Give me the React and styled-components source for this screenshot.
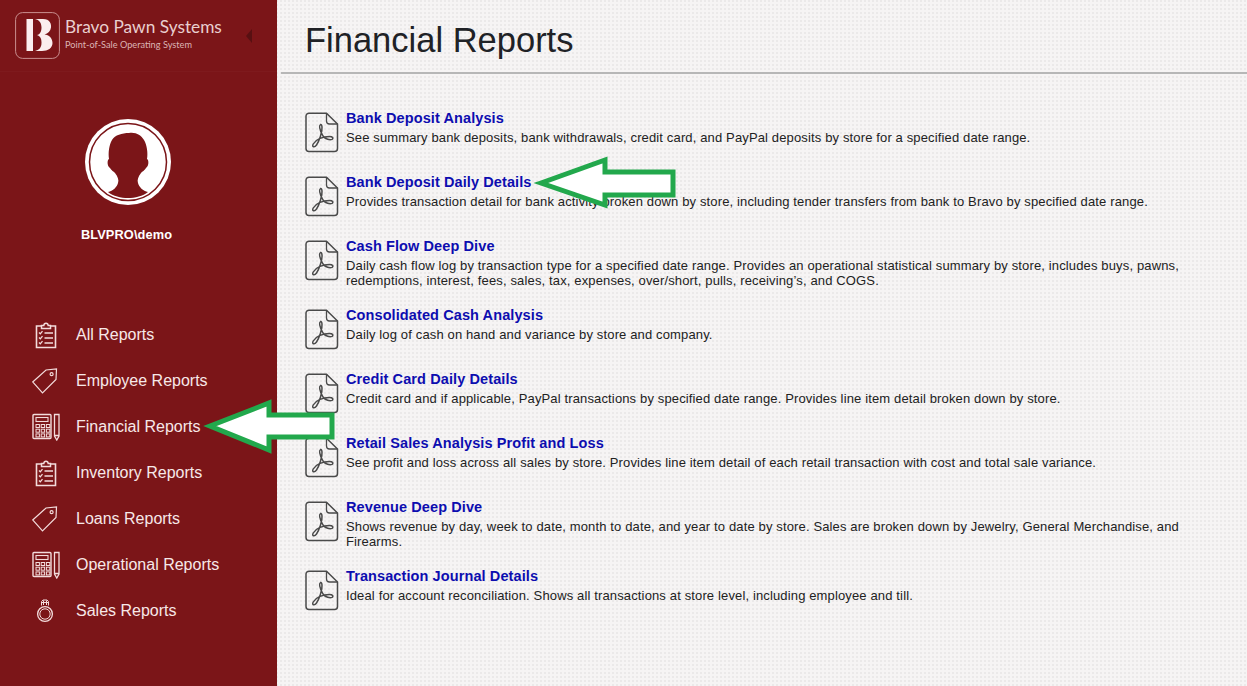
import React from "react";
import styled, { createGlobalStyle } from "styled-components";

const Global = createGlobalStyle`
  html, body { margin: 0; padding: 0; height: 100%; overflow: hidden; }
  body { font-family: "Liberation Sans", Arial, sans-serif; }
  * { box-sizing: border-box; }
`;

const Page = styled.div`
  position: relative;
  display: flex;
  width: 1247px;
  height: 686px;
  overflow: hidden;
  background-color: #f6f4f4;
  background-image: radial-gradient(circle at 1px 1px, #ebe9e9 0.8px, transparent 1px);
  background-size: 4px 4px;
`;

const Sidebar = styled.aside`
  flex: 0 0 277px;
  display: flex;
  flex-direction: column;
  background: #7b1518;
  color: #fff;
`;

const Brand = styled.div`
  height: 72px;
  display: flex;
  align-items: flex-start;
  padding: 12px 0 0 15px;
  border-bottom: 1px solid #7e1a1d;
`;

const LogoBox = styled.svg`
  width: 45px;
  height: 47px;
  flex: none;
`;

const BrandText = styled.div`
  margin: 4px 0 0 5px;
  font-family: Lato, sans-serif;
  color: #e9cfcf;
  flex: 0 0 187px;
`;

const BrandName = styled.div`
  font-size: 17.3px;
  line-height: 21px;
  white-space: nowrap;
`;

const BrandSub = styled.div`
  font-size: 9.2px;
  line-height: 12px;
  margin-top: 2px;
  white-space: nowrap;
  color: #dcb4b4;
`;

const Caret = styled.div`
  width: 0;
  height: 0;
  margin: 17px 0 0 -6px;
  border-style: solid;
  border-width: 7px 6px 7px 0;
  border-color: transparent #581012 transparent transparent;
`;

const Profile = styled.div`
  display: flex;
  flex-direction: column;
  align-items: center;
  padding: 47px 21px 0 0;
`;

const Avatar = styled.svg`
  width: 86px;
  height: 86px;
`;

const UserName = styled.div`
  margin: 22px 3px 0 0;
  font-size: 12.8px;
  line-height: 16px;
  font-weight: 700;
  letter-spacing: 0.1px;
`;

const Nav = styled.nav`
  display: flex;
  flex-direction: column;
  margin-top: 69px;
  padding-left: 32px;
`;

const NavItem = styled.a`
  display: flex;
  align-items: center;
  height: 46px;
  font-size: 16px;
  color: #f7e8e8;
`;

const NavIcon = styled.svg`
  width: 28px;
  height: 28px;
  flex: none;
  margin-right: 16px;
  fill: none;
  stroke: #f3dcdc;
  stroke-width: 1.3;
`;

const Main = styled.main`
  flex: 1;
  min-width: 0;
  padding-left: 4px;
`;

const Header = styled.header`
  height: 74px;
  padding: 18px 0 0 24px;
  border-bottom: 2px solid #b7b7b7;
`;

const Title = styled.h1`
  margin: 0;
  font-size: 34.5px;
  line-height: 44px;
  font-weight: 400;
  color: #202226;
`;

const ReportList = styled.div`
  display: flex;
  flex-direction: column;
  padding: 36px 60px 0 24px;
`;

const Report = styled.article`
  display: flex;
  align-items: flex-start;
  min-height: 45px;
  margin-bottom: 19px;
`;

const PdfIcon = styled.svg`
  width: 34px;
  height: 41px;
  flex: none;
  margin: 2px 7px 0 0;
  fill: none;
  stroke: #4a4a4a;
`;

const ReportBody = styled.div`
  min-width: 0;
`;

const ReportTitle = styled.a`
  display: block;
  font-size: 14.5px;
  line-height: 17px;
  font-weight: 700;
  color: #0d0db0;
  letter-spacing: 0.1px;
`;

const ReportDesc = styled.p`
  margin: 3px 0 0;
  font-size: 13px;
  line-height: 15px;
  color: #222;
  letter-spacing: 0.14px;
`;

const Overlay = styled.svg`
  position: absolute;
  left: 0;
  top: 0;
  width: 1247px;
  height: 686px;
  pointer-events: none;
`;

const Pdf = () => (
  <PdfIcon viewBox="0 0 34 41">
    <path d="M4 1.2 H21.5 L32.5 12 V36.5 a3 3 0 0 1 -3 3 H4 a3 3 0 0 1 -3 -3 V4.2 a3 3 0 0 1 3 -3 Z" strokeWidth="1.5" />
    <path d="M21.5 1.2 V9 a3 3 0 0 0 3 3 H32.5" strokeWidth="1.3" />
    <path d="M15.5 12.5 C13.5 14 15.8 20 18 24 C20.5 27.5 25 28 27 27.4 C28.8 26.5 27.6 24.4 24.5 24.4 C18 24.4 11 27 8.2 32 C6.6 35 9.4 36 11.5 33 C14 29.5 17.5 20 17 15 C16.8 12.8 16.2 12.2 15.5 12.5 Z" strokeWidth="1.5" />
  </PdfIcon>
);

const Clipboard = () => (
  <NavIcon viewBox="0 0 28 28">
    <path d="M9.5 5 H4.5 V26.5 H23.5 V5 H18.5" strokeWidth="1.6" />
    <path d="M9.5 7.5 V4.5 H11.8 C12 1.5 16 1.5 16.2 4.5 H18.5 V7.5 Z" strokeWidth="1.5" />
    <path d="M7 11.5 l1.3 1.3 l2.2 -2.6 M7 16.5 l1.3 1.3 l2.2 -2.6 M7 21.5 l1.3 1.3 l2.2 -2.6" strokeWidth="1.3" />
    <path d="M12.5 12 H21 M12.5 17 H21 M12.5 22 H21" strokeWidth="1.6" />
  </NavIcon>
);

const Tag = () => (
  <NavIcon viewBox="0 0 28 28">
    <path d="M0.7 15 L14 3 L24.5 2 L24 12.5 L10.5 26 Z" strokeWidth="1.2" />
    <circle cx="19.6" cy="7.2" r="1.5" strokeWidth="1.2" />
  </NavIcon>
);

const Calc = () => {
  const keys = [];
  for (let r = 0; r < 3; r++) for (let c = 0; c < 3; c++) keys.push(<rect key={r + "-" + c} x={4 + c * 5.2} y={11.5 + r * 4.7} width="3.4" height="3" strokeWidth="1" />);
  return (
    <NavIcon viewBox="0 0 28 28">
      <rect x="1" y="1.5" width="18" height="24" rx="1" strokeWidth="1.4" />
      <rect x="4" y="4.5" width="12" height="4" strokeWidth="1.1" />
      {keys}
      <path d="M22.5 1.5 H27 V23 L24.8 27 L22.5 23 Z M22.5 22.5 H27" strokeWidth="1.3" />
    </NavIcon>
  );
};

const Ring = () => (
  <NavIcon viewBox="0 0 28 28">
    <circle cx="13" cy="17" r="7.4" strokeWidth="1.3" />
    <circle cx="13" cy="17" r="5.2" strokeWidth="1" />
    <path d="M9.5 8.5 V4.5 L11 3 H15 L16.5 4.5 V8.5 M11.5 3.5 V8 M14.5 3.5 V8 M9.5 5.5 H16.5" strokeWidth="1" />
  </NavIcon>
);

const navItems = [
  ["All Reports", Clipboard],
  ["Employee Reports", Tag],
  ["Financial Reports", Calc],
  ["Inventory Reports", Clipboard],
  ["Loans Reports", Tag],
  ["Operational Reports", Calc],
  ["Sales Reports", Ring],
];

const reports = [
  ["Bank Deposit Analysis", "See summary bank deposits, bank withdrawals, credit card, and PayPal deposits by store for a specified date range."],
  ["Bank Deposit Daily Details", "Provides transaction detail for bank activity broken down by store, including tender transfers from bank to Bravo by specified date range."],
  ["Cash Flow Deep Dive", "Daily cash flow log by transaction type for a specified date range. Provides an operational statistical summary by store, includes buys, pawns, redemptions, interest, fees, sales, tax, expenses, over/short, pulls, receiving’s, and COGS."],
  ["Consolidated Cash Analysis", "Daily log of cash on hand and variance by store and company."],
  ["Credit Card Daily Details", "Credit card and if applicable, PayPal transactions by specified date range. Provides line item detail broken down by store."],
  ["Retail Sales Analysis Profit and Loss", "See profit and loss across all sales by store. Provides line item detail of each retail transaction with cost and total sale variance."],
  ["Revenue Deep Dive", "Shows revenue by day, week to date, month to date, and year to date by store. Sales are broken down by Jewelry, General Merchandise, and Firearms."],
  ["Transaction Journal Details", "Ideal for account reconciliation. Shows all transactions at store level, including employee and till."],
];

export default function App() {
  return (
    <Page>
      <Global />
      <Sidebar>
        <Brand>
          <LogoBox viewBox="0 0 45 47">
            <rect x="0.6" y="0.6" width="43.8" height="45.8" rx="7" fill="none" stroke="#c98f8f" strokeWidth="1" />
            <path d="M11.5 7 H18 V39 H11.5 Z" fill="#fbeeee" />
            <path d="M20 7 H28 C35 7 36.5 12 36 15.5 C35.5 19 33 21.5 29.5 22.5 C34 23 37.5 26 37.5 31 C37.5 36 33 39 27 39 H20 C24 38 26.5 36 26.5 30.5 C26.5 26 25 24 22 23 C25 22.5 26.5 19.5 26.5 15.5 C26.5 11 24.5 8 20 7 Z" fill="#fbeeee" />
          </LogoBox>
          <BrandText>
            <BrandName>Bravo Pawn Systems</BrandName>
            <BrandSub>Point-of-Sale Operating System</BrandSub>
          </BrandText>
          <Caret />
        </Brand>
        <Profile>
          <Avatar viewBox="0 0 86 86">
            <circle cx="43" cy="43" r="43" fill="#fff" />
            <circle cx="43" cy="43" r="38.5" fill="none" stroke="#7b1518" strokeWidth="1.5" />
            <path d="M44 14 C37 14 30 16 27 21 C24 26 23 34 24 40 C22 41 22 47 25 49 C27 52 28 52 30 54 C33 58 34 61 33 64 C32 68 28 72 23 73 C28 77 36 79 43 79 C50 79 58 77 63 73 C58 72 54 68 53 64 C52 61 53 58 56 54 C58 52 59 52 61 49 C64 47 64 41 62 40 C63 34 62 26 59 21 C56 16 51 13 44 14 Z" fill="#7b1518" />
          </Avatar>
          <UserName>BLVPRO\demo</UserName>
        </Profile>
        <Nav>
          {navItems.map(([label, Icon]) => (
            <NavItem key={label}>
              <Icon />
              {label}
            </NavItem>
          ))}
        </Nav>
      </Sidebar>
      <Main>
        <Header>
          <Title>Financial Reports</Title>
        </Header>
        <ReportList>
          {reports.map(([title, desc]) => (
            <Report key={title}>
              <Pdf />
              <ReportBody>
                <ReportTitle>{title}</ReportTitle>
                <ReportDesc>{desc}</ReportDesc>
              </ReportBody>
            </Report>
          ))}
        </ReportList>
      </Main>
      <Overlay viewBox="0 0 1247 686">
        <path d="M210 426 L269 403 V415 H332 V437 H269 V450 Z" fill="#fff" stroke="#22a84c" strokeWidth="5" />
        <path d="M541 183 L605 160 V172 H673 V195 H605 V205 Z" fill="#fff" stroke="#22a84c" strokeWidth="5" />
      </Overlay>
    </Page>
  );
}
